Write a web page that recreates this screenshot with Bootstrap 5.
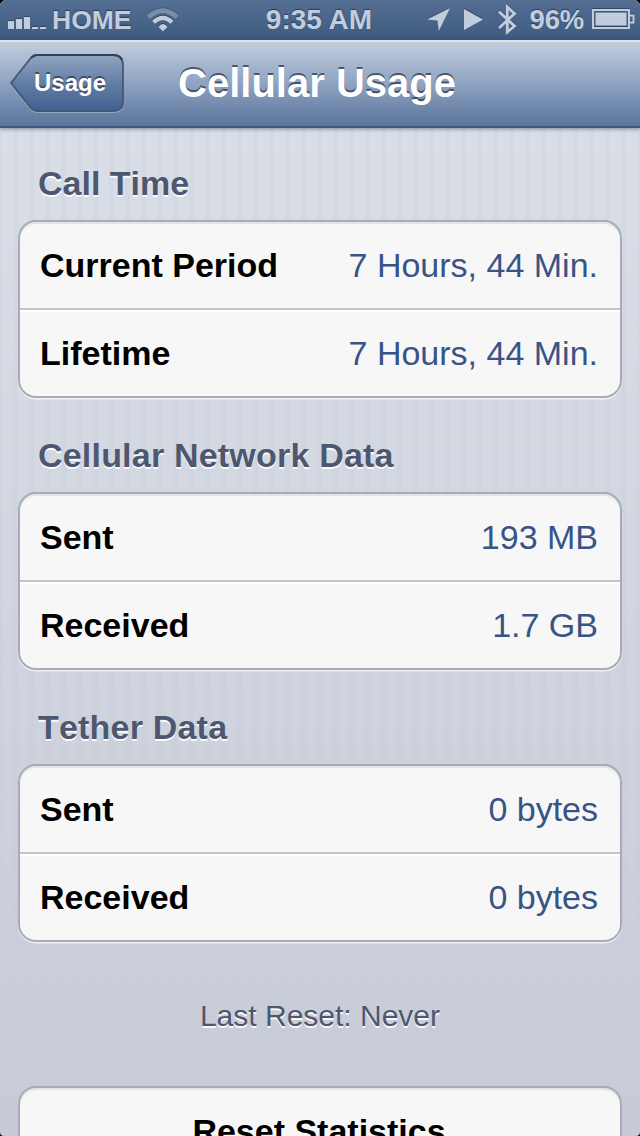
<!DOCTYPE html>
<html lang="en">
<head>
<meta charset="utf-8">
<meta name="viewport" content="width=device-width, initial-scale=1">
<title>Cellular Usage</title>
<link href="https://cdn.jsdelivr.net/npm/bootstrap@5.3.0/dist/css/bootstrap.min.css" rel="stylesheet">
<style>
  html { background: #000; }
  body { font-family: "Liberation Sans", Arial, sans-serif; background: #000; }
  .screen {
    height: 1136px; border-radius: 6px 6px 4px 4px;
    background:
      repeating-linear-gradient(90deg, rgba(190,198,214,.17) 0 2px, transparent 2px 13px, rgba(190,198,214,.17) 13px 16px),
      linear-gradient(#d9dee7 128px, #c7cbd6 1136px);
  }
  .status { height: 40px; background: linear-gradient(#546f92, #3e5a80); color: #c1cddd; font-size: 28px; font-weight: 700; line-height: 40px; text-shadow: 0 -1px 1px rgba(30,45,70,.75); }
  .status svg { filter: drop-shadow(0 -1px 0 rgba(30,45,70,.55)); }
  .status .side { width: 262px; }
  .clock { padding-right: 2px; }
  .carrier { font-size: 26.5px; }
  .charge { font-size: 27.5px; letter-spacing: -.2px; }
  .titlebar { height: 88px; background: linear-gradient(#c0cddc, #8ea3c1 50%, #7d94b5 65%, #5a759b); border-top: 2px solid #dce4ec; border-bottom: 2px solid #3c5880; box-shadow: 0 1px 4px rgba(40,50,70,.5); }
  .back { width: 116px; height: 60px; left: 9px; top: 11px; }
  .back-label { font-size: 24px; line-height: 60px; padding-left: 25px; }
  .titlebar h1 { font-size: 40px; line-height: 82px; padding-right: 6px; }
  .etched-dark { color: #fff; text-shadow: 0 -2px 0 rgba(50,62,82,.8); }
  .etched { color: #4d576f; text-shadow: 0 2px 0 rgba(255,255,255,.9); }
  .content { padding: 0 2px; }
  .content section { padding-top: 37px; height: 272px; }
  .content section:first-child { padding-top: 35px; height: 270px; }
  .group-title { font-size: 34px; line-height: 40px; padding-left: 20px; margin: 0 0 17px; font-kerning: none; }
  .wide-title { letter-spacing: .2px; }
  .panel { border: 2px solid #a7acb6; border-radius: 18px; background: #f7f7f7; box-shadow: 0 1.5px 0 rgba(255,255,255,.65), inset 0 2px 1px rgba(0,0,0,.08); font-size: 34px; }
  .panel .list-group-item { height: 86px; line-height: 86px; padding: 0 22px 0 20px; background: transparent; border: 0; color: #000; }
  .panel .list-group-item + .list-group-item { height: 88px; border-top: 2px solid #c3c5c8; box-shadow: inset 0 2px 0 #fff; }
  .amount { color: #385487; }
  .note { font-size: 30px; line-height: 36px; margin: 56px 0 52px; }
</style>
</head>
<body class="m-0 overflow-hidden">
<div class="screen overflow-hidden">
  <header>
    <div class="status d-flex align-items-center justify-content-between">
      <div class="side d-flex align-items-center">
        <svg width="52" height="40" viewBox="0 0 52 40" fill="#c1cddd"><path d="M8 21h6v8H8zM16 19h6v10h-6zM24 17h6v12h-6zM32 27h6v2h-6zM40 27h6v2h-6z"/></svg>
        <span class="carrier">HOME</span>
        <svg width="46" height="40" viewBox="0 0 46 40" fill="none" stroke="#c1cddd">
          <path d="M16.300 17Q31 4.300 45 17" stroke-width="4.500" opacity=".45"/>
          <path d="M21.500 22.200Q31 13.600 40 22.200" stroke-width="4"/>
          <path d="M26.500 27Q31 21 35.500 27L31 31.300z" fill="#c1cddd" stroke="none"/>
        </svg>
      </div>
      <span class="clock">9:35 AM</span>
      <div class="side d-flex align-items-center justify-content-end">
        <svg width="96" height="40" viewBox="0 0 96 40">
          <path d="M27 19.500 50 8 38.800 31 37.500 20.500z M64 9 83 19.500 64 30z" fill="#c1cddd"/>
        </svg>
        <svg width="34" height="40" viewBox="0 0 34 40" fill="none" stroke="#c1cddd" stroke-width="2.800"><path d="M3 11.500 18.500 26 11.300 32V7l7.200 6.500L3 28"/></svg>
        <span class="charge">96%</span>
        <svg width="56" height="40" viewBox="0 0 56 40"><path d="M9 10h36v18H9zM46 15.500h3.500v7H46" fill="none" stroke="#c1cddd" stroke-width="2"/><path d="M11.500 12.500h31v13h-31z" fill="#c1cddd"/></svg>
      </div>
    </div>
    <nav class="titlebar position-relative text-center">
      <a href="#" class="back position-absolute text-decoration-none text-start">
        <svg class="position-absolute top-0 start-0" width="118" height="64" viewBox="0 0 118 64">
          <defs><linearGradient id="tab" x2="0" y2="1"><stop stop-color="#92a5c2"/><stop offset=".5" stop-color="#627ea6"/><stop offset="1" stop-color="#40608f"/></linearGradient></defs>
          <path d="M28 2H104Q114 2 114 12V48Q114 58 104 58H28Q24 58 21 54L2 30 21 6Q24 2 28 2Z" fill="none" stroke="#a9bad0" stroke-opacity=".6" stroke-width="2" transform="translate(0 1)"/>
          <path d="M28 2H104Q114 2 114 12V48Q114 58 104 58H28Q24 58 21 54L2 30 21 6Q24 2 28 2Z" fill="url(#tab)" stroke="#445777" stroke-width="1.800"/>
          <path d="M22 5Q25 2 28 2H104Q111 2 113 7" fill="none" stroke="#354058" stroke-width="2"/>
        </svg>
        <span class="back-label etched-dark fw-bold position-relative d-block">Usage</span>
      </a>
      <h1 class="etched-dark fw-bold m-0">Cellular Usage</h1>
    </nav>
  </header>
  <main class="px-3">
    <div class="content">
      <section>
        <h2 class="group-title etched fw-bold">Call Time</h2>
        <ul class="panel list-group">
          <li class="list-group-item d-flex justify-content-between"><b>Current Period</b><span class="amount">7 Hours, 44 Min.</span></li>
          <li class="list-group-item d-flex justify-content-between"><b>Lifetime</b><span class="amount">7 Hours, 44 Min.</span></li>
        </ul>
      </section>
      <section>
        <h2 class="group-title wide-title etched fw-bold">Cellular Network Data</h2>
        <ul class="panel list-group">
          <li class="list-group-item d-flex justify-content-between"><b>Sent</b><span class="amount">193 MB</span></li>
          <li class="list-group-item d-flex justify-content-between"><b>Received</b><span class="amount">1.7 GB</span></li>
        </ul>
      </section>
      <section>
        <h2 class="group-title wide-title etched fw-bold">Tether Data</h2>
        <ul class="panel list-group">
          <li class="list-group-item d-flex justify-content-between"><b>Sent</b><span class="amount">0 bytes</span></li>
          <li class="list-group-item d-flex justify-content-between"><b>Received</b><span class="amount">0 bytes</span></li>
        </ul>
      </section>
      <p class="note etched text-center">Last Reset: Never</p>
      <div class="panel list-group"><button class="list-group-item text-center fw-bold">Reset Statistics</button></div>
    </div>
  </main>
</div>
<script src="https://cdn.jsdelivr.net/npm/bootstrap@5.3.0/dist/js/bootstrap.bundle.min.js"></script>
</body>
</html>
